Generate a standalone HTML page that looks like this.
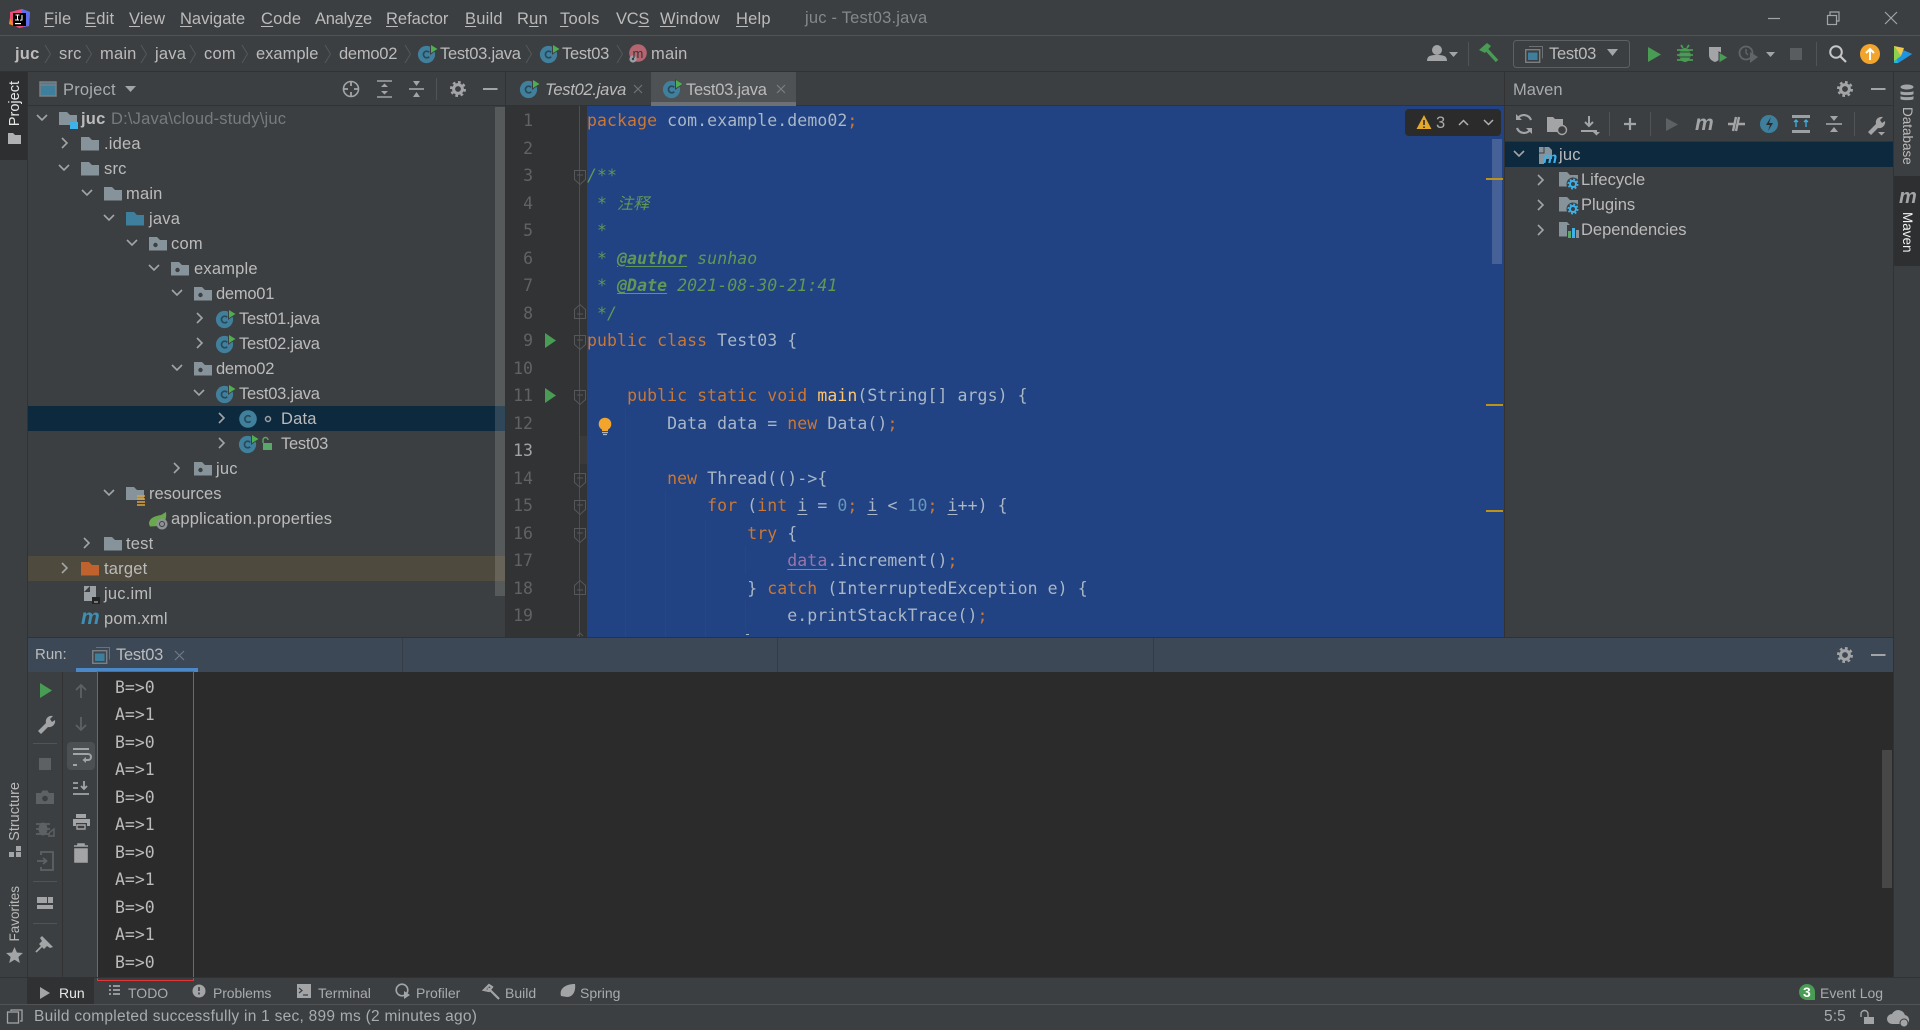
<!DOCTYPE html>
<html lang="en"><head><meta charset="utf-8"><title>juc - Test03.java</title>
<style>
html,body{margin:0;padding:0;background:#3c3f41;width:1920px;height:1030px;overflow:hidden}
*{box-sizing:border-box}
.b{position:absolute}
.t{position:absolute;white-space:pre;line-height:24px;height:24px;font:16.5px/24px "Liberation Sans","Noto Sans CJK SC",sans-serif;letter-spacing:.2px;color:#bbb}
.t u{text-underline-offset:2px;text-decoration-thickness:1px}
.w{letter-spacing:-.25px}
.m0{letter-spacing:0}
.s{font-size:14px;letter-spacing:0;color:#a9abad}
.c{position:absolute;left:587px;white-space:pre;font:16.5px/27.5px "DejaVu Sans Mono",monospace;letter-spacing:.08px;height:27.5px;color:#a9b7c6}
.k{color:#cc7832}.n{color:#6897bb}.f{color:#ffc66d}
.d{color:#629755;font-style:italic}
.g{font-weight:bold;text-decoration:underline;text-underline-offset:2px}
.v{color:#9876aa;text-decoration:underline;text-underline-offset:3px}
.i{text-decoration:underline;text-underline-offset:3px}
.cj{font:italic 16px "Noto Sans CJK SC",sans-serif}
.ln{position:absolute;left:506px;width:27px;text-align:right;font:16.5px/27.5px "DejaVu Sans Mono",monospace;color:#606366}
.o{position:absolute;left:115px;font:16.5px/27.5px "DejaVu Sans Mono",monospace;color:#bbb;white-space:pre}
.vt{position:absolute;writing-mode:vertical-rl;font:14.5px/20px "Liberation Sans",sans-serif;letter-spacing:0;color:#bbb;white-space:pre}
.up{transform:rotate(180deg)}
</style></head><body>

<!-- panels -->
<div class="b" style="left:0;top:35px;width:1920px;height:1px;background:#515355"></div>
<div class="b" style="left:0;top:71px;width:1920px;height:1px;background:#323232"></div>
<div class="b" style="left:0;top:72px;width:27px;height:88px;background:#2d2f30"></div>
<div class="b" style="left:27px;top:72px;width:1px;height:905px;background:#323232"></div>
<div class="b" style="left:27px;top:105px;width:478px;height:1px;background:#323232"></div>
<div class="b" style="left:28px;top:406px;width:478px;height:25px;background:#0d293e"></div>
<div class="b" style="left:28px;top:556px;width:478px;height:25px;background:#4f4a3e"></div>
<div class="b" style="left:495px;top:107px;width:10px;height:489px;background:rgba(255,255,255,.14)"></div>
<div class="b" style="left:505px;top:72px;width:1px;height:565px;background:#323232"></div>

<!-- tabs -->
<div class="b" style="left:506px;top:105px;width:999px;height:1px;background:#323232"></div>
<div class="b" style="left:651px;top:72px;width:145px;height:33px;background:#4e5254"></div>
<div class="b" style="left:651px;top:102px;width:145px;height:4px;background:#6e7173"></div>

<!-- editor -->
<div class="b" style="left:506px;top:106px;width:81px;height:531px;background:#313335"></div>
<div class="b" style="left:580px;top:436px;width:7px;height:28px;background:#3a3a3a"></div>
<div class="b" style="left:587px;top:106px;width:918px;height:531px;background:#214283;overflow:hidden"></div>
<div class="b" style="left:579px;top:106px;width:1px;height:531px;background:#4d4f51"></div>

<!-- maven -->
<div class="b" style="left:1504px;top:72px;width:1px;height:565px;background:#323232"></div>
<div class="b" style="left:1505px;top:105px;width:389px;height:1px;background:#323232"></div>
<div class="b" style="left:1505px;top:141px;width:389px;height:1px;background:#323232"></div>
<div class="b" style="left:1505px;top:142px;width:389px;height:25px;background:#0d293e"></div>
<div class="b" style="left:1893px;top:72px;width:1px;height:905px;background:#323232"></div>
<div class="b" style="left:1894px;top:176px;width:26px;height:90px;background:#2d2f30"></div>

<!-- run -->
<div class="b" style="left:27px;top:637px;width:1867px;height:1px;background:#323232"></div>
<div class="b" style="left:28px;top:638px;width:1865px;height:34px;background:#3c4856"></div>
<div class="b" style="left:402px;top:638px;width:1px;height:34px;background:#353c46"></div>
<div class="b" style="left:777px;top:638px;width:1px;height:34px;background:#353c46"></div>
<div class="b" style="left:1153px;top:638px;width:1px;height:34px;background:#353c46"></div>
<div class="b" style="left:76px;top:668px;width:122px;height:4px;background:#4a88c7"></div>
<div class="b" style="left:97px;top:672px;width:1796px;height:305px;background:#2b2b2b"></div>
<div class="b" style="left:62px;top:672px;width:1px;height:305px;background:#323232"></div>
<div class="b" style="left:1882px;top:750px;width:10px;height:138px;background:#474747"></div>
<div class="b" style="left:97px;top:671px;width:97px;height:310px;border:1.5px solid #e53535"></div>
<div class="b" style="left:67px;top:742px;width:28px;height:28px;background:#4c5052;border-radius:4px"></div>

<!-- bottom -->
<div class="b" style="left:0;top:977px;width:1920px;height:1px;background:#323232"></div>
<div class="b" style="left:27px;top:978px;width:67px;height:26px;background:#2f3132"></div>
<div class="b" style="left:0;top:1004px;width:1920px;height:1px;background:#515355"></div>

<!-- inspection widget -->
<div class="b" style="left:1405px;top:109px;width:96px;height:27px;background:#2b2b2b;border-radius:4px"></div>
<div class="b" style="left:1492px;top:139px;width:10px;height:125px;background:rgba(255,255,255,.17)"></div>
<div class="b" style="left:1486px;top:178px;width:17px;height:2px;background:#be9117"></div>
<div class="b" style="left:1486px;top:404px;width:17px;height:2px;background:#be9117"></div>
<div class="b" style="left:1486px;top:510px;width:17px;height:2px;background:#be9117"></div>

<!-- indent guides -->
<div class="b" style="left:625px;top:409px;width:1px;height:228px;background:#33456e"></div>
<div class="b" style="left:665px;top:491px;width:1px;height:146px;background:#33456e"></div>
<div class="b" style="left:705px;top:519px;width:1px;height:118px;background:#33456e"></div>
<div class="b" style="left:745px;top:546px;width:1px;height:28px;background:#33456e"></div>
<div class="b" style="left:745px;top:601px;width:1px;height:28px;background:#33456e"></div>

<svg class="b" style="left:0;top:0" width="1920" height="1030" viewBox="0 0 1920 1030" fill="none">
<defs>
<symbol id="fo" width="18" height="14" viewBox="0 0 18 14" overflow="visible"><path d="M0 0h8l3 3h7v10.500H0z" fill="#87939a"/></symbol>
<symbol id="pk" width="18" height="14" viewBox="0 0 18 14" overflow="visible"><path d="M0 0h8l3 3h7v10.500H0z" fill="#87939a"/><circle cx="6.500" cy="8" r="2.200" fill="#3c3f41"/></symbol>
<symbol id="cl" width="18" height="18" viewBox="0 0 18 18" overflow="visible"><circle cx="8.500" cy="9.500" r="8.600" fill="#40809d"/><path d="M11.200 7.300A3.300 3.300 0 1 0 11.200 11.700" stroke="#27495a" stroke-width="1.700"/><path d="M12 -1l8 5-8 6z" fill="#3c3f41"/><path d="M13 0l6.500 4-6.500 4z" fill="#4fae4f"/></symbol>
<symbol id="cn" width="18" height="18" viewBox="0 0 18 18" overflow="visible"><circle cx="9" cy="9" r="8.800" fill="#40809d"/><path d="M11.600 6.800A3.300 3.300 0 1 0 11.600 11.200" stroke="#27495a" stroke-width="1.700"/></symbol>
<symbol id="dn" width="12" height="8" viewBox="0 0 12 8" overflow="visible"><path d="M1 1l5 5 5-5" stroke="#a2a4a6" stroke-width="1.600"/></symbol>
<symbol id="rt" width="8" height="12" viewBox="0 0 8 12" overflow="visible"><path d="M1 1l5 5-5 5" stroke="#a2a4a6" stroke-width="1.600"/></symbol>
<symbol id="nv" width="6" height="18" viewBox="0 0 6 18" overflow="visible"><path d="M0 0l5.500 9L0 18" stroke="#55585a" stroke-width="1"/></symbol>
<symbol id="gr" width="16" height="16" viewBox="0 0 16 16" overflow="visible"><circle cx="8" cy="8" r="4.400" stroke="#a2a4a6" stroke-width="3"/><circle cx="8" cy="8" r="6.800" stroke="#a2a4a6" stroke-width="2.400" stroke-dasharray="2.700 2.600"/></symbol>
<symbol id="bg" width="10" height="10" viewBox="0 0 10 10" overflow="visible"><circle cx="5" cy="5" r="3" stroke="#3db1e8" stroke-width="2"/><circle cx="5" cy="5" r="4.700" stroke="#3db1e8" stroke-width="1.600" stroke-dasharray="1.900 1.800"/></symbol>
<symbol id="fa" width="12" height="15" viewBox="0 0 12 15" overflow="visible"><path d="M.5.5h11v9L6 14.500.5 9.500z" stroke="#55585a"/><path d="M3 5h6" stroke="#55585a"/></symbol>
<symbol id="fb" width="12" height="15" viewBox="0 0 12 15" overflow="visible"><path d="M.5 14.500h11v-9L6 .5.500 5.500z" stroke="#55585a"/><path d="M3 10h6" stroke="#55585a"/></symbol>
<symbol id="tw" width="18" height="17" viewBox="0 0 18 17" overflow="visible"><path d="M4 .5h13.500v12" stroke="#6e7173"/><rect x=".7" y="3.700" width="14" height="12.600" stroke="#7c7f81" stroke-width="1.400"/><rect x="3" y="6.500" width="9.500" height="7.500" fill="#3d7f9d"/></symbol>
</defs>

<!-- logo -->
<path d="M10 12l12-3 8 3 -1 14-10 2-9-5z" fill="#ee4c7c"/><path d="M22 9l8 3-1 14-6 1z" fill="#5d6df0"/><path d="M10 18l-1 6 5 2z" fill="#f58a1f"/>
<rect x="13" y="13" width="13" height="13" fill="#000"/><path d="M15.500 15h4M17.500 15v5M15 20h4M22 15v5l-2 .3" stroke="#fff" stroke-width="1"/><rect x="15" y="23" width="6" height="1.200" fill="#fff"/>

<!-- nav chevrons -->
<use href="#nv" x="45" y="45"/><use href="#nv" x="86" y="45"/><use href="#nv" x="141" y="45"/><use href="#nv" x="190" y="45"/><use href="#nv" x="242" y="45"/><use href="#nv" x="325" y="45"/><use href="#nv" x="405" y="45"/><use href="#nv" x="526" y="45"/><use href="#nv" x="617" y="45"/>
<use href="#cl" x="418" y="45"/><use href="#cl" x="540" y="45"/>
<circle cx="638" cy="53" r="8.800" fill="#b56570"/><circle cx="633" cy="59" r="3.600" fill="#9aa0a4"/><circle cx="633" cy="59" r="1.200" fill="#3c3f41"/>

<!-- window btns -->
<path d="M1768 18.500h12" stroke="#a2a4a6" stroke-width="1.200"/>
<rect x="1827.500" y="15.500" width="9" height="9" stroke="#a2a4a6" stroke-width="1.200"/><path d="M1830 15v-3h9v9h-2.500" stroke="#a2a4a6" stroke-width="1.200"/>
<path d="M1885 12l12 12m0-12l-12 12" stroke="#a2a4a6" stroke-width="1.200"/>

<!-- top toolbar -->
<circle cx="1437" cy="50" r="5" fill="#a2a4a6"/><path d="M1427 61c0-5 3-6 10-6s10 1 10 6z" fill="#a2a4a6"/>
<path d="M1449 52h9l-4.500 5z" fill="#a2a4a6"/><path d="M1468.500 42v24" stroke="#515355"/>
<path d="M1486 49l11 12" stroke="#499c54" stroke-width="3.400"/><path d="M1479 50l8-7 4 3-6 7z" fill="#499c54"/>
<rect x="1513.500" y="40.500" width="116" height="27" rx="3" stroke="#5e6163" stroke-width="1"/>
<use href="#tw" x="1525" y="46"/>
<path d="M1607 49h11l-5.500 7z" fill="#a2a4a6"/>
<path d="M1648 47l13 7.500-13 7.500z" fill="#499c54"/>
<ellipse cx="1685" cy="55" rx="5.500" ry="7" fill="#499c54"/><path d="M1677 50h16M1677 55h16M1677 60h16M1681 45l2 3m6-3l-2 3" stroke="#499c54" stroke-width="1.800"/><path d="M1680 52h10M1680 57h10" stroke="#3c3f41"/>
<path d="M1709 47h12v8c0 4-3 6-6 7-3-1-6-3-6-7z" fill="#a2a4a6"/><path d="M1719 52l9 5.500-9 5.500z" fill="#499c54" stroke="#3c3f41"/>
<circle cx="1746" cy="53" r="6.500" stroke="#626567" stroke-width="1.800"/><path d="M1746 49v4l2 2" stroke="#626567" stroke-width="1.400"/><path d="M1750 52l8 5-8 6z" fill="#626567"/>
<path d="M1766 52h9l-4.500 5z" fill="#a2a4a6"/>
<rect x="1790" y="48" width="12" height="12" fill="#5a5d5f"/>
<path d="M1816.500 42v24" stroke="#515355"/>
<circle cx="1836" cy="52" r="5.800" stroke="#c4c6c8" stroke-width="2"/><path d="M1840 56l6 6" stroke="#c4c6c8" stroke-width="2.200"/>
<circle cx="1870" cy="54" r="10" fill="#f2a52c"/><path d="M1870 60v-11m-4 4l4-4 4 4" stroke="#fff" stroke-width="2"/>
<path d="M1894 46l18 8-14 9h-4z" fill="#25b8d8"/><path d="M1894 46l4 17 14-9z" fill="#1f95e0"/><path d="M1894 46v15l7-5z" fill="#8cd14b"/><path d="M1894 46l10 2-3 8z" fill="#f2c94c"/>

<!-- project header -->
<rect x="40" y="82" width="16" height="14" fill="#3d7f9d" stroke="#7c7f81" stroke-width="1.500"/><path d="M40 85h16" stroke="#7c7f81" stroke-width="1.500"/>
<path d="M125 86h11l-5.500 6z" fill="#a2a4a6"/>
<circle cx="351" cy="89" r="7.500" stroke="#a2a4a6" stroke-width="1.600"/><path d="M351 81v5m0 6v5m-8-8h5m6 0h5" stroke="#a2a4a6" stroke-width="1.800"/>
<path d="M377 81h15M377 97h15" stroke="#a2a4a6" stroke-width="1.600"/><path d="M381 87l3.500-3.500 3.500 3.500zM381 91l3.500 3.500 3.500-3.500z" fill="#a2a4a6"/>
<path d="M409 89h15" stroke="#a2a4a6" stroke-width="1.600"/><path d="M413 81h7l-3.500 5zM413 97h7l-3.500-5z" fill="#a2a4a6"/>
<path d="M436.500 78v22" stroke="#515355"/>
<use href="#gr" x="450" y="81"/><path d="M483 89h14.500" stroke="#a2a4a6" stroke-width="2"/>

<!-- left stripe -->
<path d="M8 133h5l2 2h6v9H8z" fill="#afb1b3"/>
<path d="M9 852h5v5H9zM16 852h5v5h-5zM16 846h5v5h-5z" fill="#a2a4a6"/>
<path d="M14.500 947l2.400 5.500 6 .5-4.500 4 1.400 6-5.300-3.200L9.200 963l1.400-6-4.500-4 6-.5z" fill="#a2a4a6"/>

<!-- tree icons -->
<use href="#dn" x="36" y="114"/><path d="M59 112h8l3 3h7v10H59z" fill="#87939a"/><rect x="70" y="122" width="8" height="7" fill="#3db1e8"/>
<use href="#rt" x="61" y="137"/><use href="#fo" x="81" y="137"/>
<use href="#dn" x="58" y="164"/><use href="#fo" x="81" y="162"/>
<use href="#dn" x="81" y="189"/><use href="#fo" x="104" y="187"/>
<use href="#dn" x="103" y="214"/><path d="M126 212h8l3 3h7v10.500h-18z" fill="#3d7f9d"/>
<use href="#dn" x="126" y="239"/><use href="#pk" x="149" y="237"/>
<use href="#dn" x="148" y="264"/><use href="#pk" x="171" y="262"/>
<use href="#dn" x="171" y="289"/><use href="#pk" x="194" y="287"/>
<use href="#rt" x="196" y="312"/><use href="#cl" x="216" y="310"/>
<use href="#rt" x="196" y="337"/><use href="#cl" x="216" y="335"/>
<use href="#dn" x="171" y="364"/><use href="#pk" x="194" y="362"/>
<use href="#dn" x="193" y="389"/><use href="#cl" x="216" y="385"/>
<use href="#rt" x="218" y="412"/><use href="#cn" x="239" y="410"/><circle cx="268" cy="419" r="2.500" stroke="#9aa0a4" stroke-width="1.500"/>
<use href="#rt" x="218" y="437"/><use href="#cl" x="239" y="435"/><rect x="263" y="443" width="9" height="7" fill="#59a869"/><path d="M263 443v-3a2.500 2.500 0 0 1 5 0" stroke="#59a869" stroke-width="1.400"/>
<use href="#rt" x="173" y="462"/><use href="#pk" x="194" y="462"/>
<use href="#dn" x="103" y="489"/><path d="M126 487h8l3 3h7v10h-18z" fill="#87939a"/><path d="M137 496h8M137 499h8M137 502h8M137 505h8" stroke="#d9a343" stroke-width="1.600"/>
<path d="M149 524c0-6 6-8 12-9l5-3c1 6-1 12-7 14l-9 .5z" fill="#6aa84f"/><circle cx="162" cy="524" r="5.500" fill="#8e9295"/><circle cx="162" cy="524" r="2.500" stroke="#3c3f41"/>
<use href="#rt" x="83" y="537"/><use href="#fo" x="104" y="537"/>
<use href="#rt" x="61" y="562"/><path d="M81 562h8l3 3h7v10.500H81z" fill="#c0622d"/>
<path d="M84 586h12v15H84z" fill="#9aa0a4"/><path d="M84 592l6-6v6z" fill="#3c3f41"/><rect x="92" y="597" width="8" height="7" fill="#232323"/><path d="M94 602h4" stroke="#ccc"/>

<!-- editor tabs -->
<use href="#cl" x="520" y="80"/><use href="#cl" x="663" y="80"/>
<path d="M634 85l8 8m0-8l-8 8" stroke="#6e7173" stroke-width="1.200"/><path d="M777 85l8 8m0-8l-8 8" stroke="#7c7f81" stroke-width="1.200"/>

<!-- gutter -->
<use href="#fa" x="574" y="170"/><use href="#fb" x="574" y="304"/><use href="#fa" x="574" y="335"/><use href="#fa" x="574" y="390"/><use href="#fa" x="574" y="473"/><use href="#fa" x="574" y="500"/><use href="#fa" x="574" y="528"/><use href="#fb" x="574" y="580"/>
<path d="M577 636l3-3 3 3" stroke="#55585a"/><path d="M746 634.500h3" stroke="#a9b7c6"/>
<path d="M545 333l11 7.500-11 7.500z" fill="#499c54"/><path d="M545 388l11 7.500-11 7.500z" fill="#499c54"/>
<circle cx="605" cy="424" r="6.300" fill="#f2a52c"/><path d="M602 428h6v3h-6z" fill="#f2a52c"/><path d="M602 432.500h6M603 434.500h4" stroke="#a9b7c6" stroke-width="1.200"/>

<!-- inspection -->
<path d="M1424 115l7.500 14h-15z" fill="#e2a72b"/><path d="M1424 120v5m0 1.500v1.500" stroke="#2b2b2b" stroke-width="1.600"/>
<path d="M1459 125l4.500-4.500 4.500 4.500M1484 120l4.500 4.500 4.500-4.500" stroke="#b0b2b4" stroke-width="1.500"/>

<!-- maven header -->
<use href="#gr" x="1837" y="81"/><path d="M1871 89h14.500" stroke="#a2a4a6" stroke-width="2"/>
<!-- maven toolbar -->
<path d="M1531 120a7.500 7.500 0 0 0-13-2m-1 10a7.500 7.500 0 0 0 13 2" stroke="#a2a4a6" stroke-width="2.200"/><path d="M1516 114v6h6zM1532 134v-6h-6z" fill="#a2a4a6"/>
<path d="M1547 117h6l2 2h8v13h-16z" fill="#a2a4a6"/><circle cx="1562" cy="130" r="4.500" stroke="#a2a4a6" stroke-width="1.400" fill="#3c3f41"/>
<path d="M1589 116v10m-4-4l4 4 4-4" stroke="#a2a4a6" stroke-width="2"/><path d="M1581 131h16" stroke="#a2a4a6" stroke-width="2"/><path d="M1593 132h7l-3.500 3.500z" fill="#a2a4a6"/>
<path d="M1609.500 112v24M1650.500 112v24M1854.500 112v24" stroke="#515355"/>
<path d="M1630 118v12m-6-6h12" stroke="#a2a4a6" stroke-width="2.200"/>
<path d="M1666 118l12 6.500-12 6.500z" fill="#5e6163"/>
<path d="M1728 124h7m3 0h7M1736 131l3-14M1733 131l3-14" stroke="#a2a4a6" stroke-width="2.400"/>
<circle cx="1769" cy="124" r="9" fill="#3d7f9d"/><path d="M1771 117l-5 8h4l-2 6 5-8h-4z" fill="#2b2b2b"/>
<path d="M1792 115h18v3h-18zM1792 130h18v3h-18z" fill="#9aa0a4"/><path d="M1796 127v-7m-2 2l2-2 2 2M1806 127v-7m-2 2l2-2 2 2" stroke="#3db1e8" stroke-width="1.300"/>
<path d="M1826 124h16" stroke="#a2a4a6" stroke-width="1.600"/><path d="M1830 116h8l-4 5zM1830 132h8l-4-5z" fill="#a2a4a6"/>
<path d="M1868 132l8-8c-1-4 2-8 7-7l-3 3 2 3 3-2c1 4-3 8-7 7l-7 7z" fill="#a2a4a6"/><path d="M1878 132h7l-3.500 3.500z" fill="#a2a4a6"/>

<!-- maven tree -->
<use href="#dn" x="1513" y="150"/><path d="M1539 147h10l3 3v9h-8v5h-5z" fill="#87939a"/><path d="M1544 147v6h-5" stroke="#3c3f41"/>
<use href="#rt" x="1537" y="174"/><path d="M1559 172h8l3 3h8v11.500h-19z" fill="#87939a"/><circle cx="1573" cy="184" r="6.500" fill="#3c3f41"/><use href="#bg" x="1568" y="179"/>
<use href="#rt" x="1537" y="199"/><path d="M1559 197h8l3 3h8v11.500h-19z" fill="#87939a"/><circle cx="1573" cy="209" r="6.500" fill="#3c3f41"/><use href="#bg" x="1568" y="204"/>
<use href="#rt" x="1537" y="224"/><path d="M1559 222h8l3 3h8v11.500h-19z" fill="#87939a"/><path d="M1567 225h12v13h-12z" fill="#3c3f41"/><path d="M1568 231h3v7h-3z" fill="#59a869"/><path d="M1572 228h3v10h-3z" fill="#3db1e8"/><path d="M1576 230h3v8h-3z" fill="#8e9295"/>

<!-- right stripe -->
<ellipse cx="1907" cy="87" rx="6.500" ry="2.500" fill="#a2a4a6"/><path d="M1900.500 91c0 1.500 13 1.500 13 0v3c0 1.500-13 1.500-13 0zM1900.500 96c0 1.500 13 1.500 13 0v3c0 1.500-13 1.500-13 0z" fill="#a2a4a6"/>

<!-- run tab -->
<use href="#tw" x="92" y="647"/>
<path d="M175 651l9 9m0-9l-9 9" stroke="#6e7a88" stroke-width="1.200"/>
<use href="#gr" x="1837" y="647"/><path d="M1871 655h14.500" stroke="#a2a4a6" stroke-width="2"/>

<!-- run toolbar col1 -->
<path d="M40 683l12 7.500-12 7.500z" fill="#499c54"/>
<path d="M38 731l8-8c-1-4 2-8 7-7l-3 3 2 3 3-2c1 4-3 8-7 7l-7 7z" fill="#a2a4a6"/>
<path d="M33 743.500h24M33 881.500h24M33 923.500h24" stroke="#515355"/>
<rect x="39" y="758" width="12" height="12" fill="#5e6163"/>
<path d="M36 793h5l1.500-2.500h5L49 793h5v11H36z" fill="#5e6163"/><circle cx="45" cy="798.500" r="2.800" fill="#3c3f41"/>
<ellipse cx="43" cy="829" rx="4.500" ry="6.500" fill="#5e6163"/><path d="M36 824h14M36 829h14M36 834h14" stroke="#5e6163" stroke-width="1.800"/><path d="M49 833l5-4v7h-6" stroke="#5e6163" stroke-width="1.400"/>
<path d="M41 855v-3h12v18H41v-3" stroke="#5e6163" stroke-width="1.800"/><path d="M37 861h9m-3-3l3.500 3-3.500 3" stroke="#5e6163" stroke-width="1.800"/>
<path d="M37 897h10v6H37zM48 897h5v6h-5zM37 905h16v4H37z" fill="#a2a4a6"/>
<path d="M36 952l8-8" stroke="#a2a4a6" stroke-width="1.800"/><path d="M42 936l11 11-3 1-3-2-3 3-5-5 3-3-2-3z" fill="#a2a4a6"/>

<!-- run toolbar col2 -->
<path d="M81 698v-13m-5 5l5-5 5 5" stroke="#5e6163" stroke-width="1.800"/>
<path d="M81 717v13m-5-5l5 5 5-5" stroke="#5e6163" stroke-width="1.800"/>
<path d="M73 749h16M73 754h15c4 0 4 6 0 6h-4M73 765h4" stroke="#a2a4a6" stroke-width="2"/><path d="M86 757l-3.500 3 3.500 3z" fill="#a2a4a6"/>
<path d="M73 783h5M73 788h5M73 794h16M84 781v8m-3-3l3 3 3-3" stroke="#a2a4a6" stroke-width="1.800"/>
<path d="M76 814h10v4H76z" fill="#a2a4a6"/><path d="M73 819h17v7h-3v-3H76v3h-3z" fill="#a2a4a6"/><path d="M77 825h8v4h-8z" stroke="#a2a4a6" stroke-width="1.400"/>
<path d="M75 849h12v13H75zM74 846h14M78 846v-2h6v2" stroke="#a2a4a6" stroke-width="1.600" fill="#a2a4a6"/>

<!-- bottom tool -->
<path d="M40 987l10 6-10 6z" fill="#a2a4a6"/>
<path d="M109 986h2M109 990h2M109 994h2M113 986h7M113 990h7M113 994h7" stroke="#a2a4a6" stroke-width="1.800"/>
<circle cx="199" cy="991" r="6.500" fill="#a2a4a6"/><path d="M199 987v4m0 1.500v2" stroke="#3c3f41" stroke-width="1.600"/>
<rect x="297" y="984" width="14" height="14" fill="#a2a4a6"/><path d="M299 988l3 2.500-3 2.500M303 995h5" stroke="#3c3f41" stroke-width="1.200"/>
<circle cx="402" cy="990" r="5.800" stroke="#a2a4a6" stroke-width="1.600"/><path d="M404 991l6 4-6 4z" fill="#a2a4a6"/>
<path d="M484 990l5-5 3 2-3 4zM488 988l11 11" stroke="#a2a4a6" stroke-width="2.200"/>
<path d="M561 996c-2-7 4-12 14-12 1 7-2 13-8 13z" fill="#a2a4a6"/>
<path d="M1807 984a8 8 0 1 0 0 16h8v-8a8 8 0 0 0-8-8z" fill="#499c54"/>

<!-- status -->
<rect x="7.500" y="1012" width="11" height="11" stroke="#a2a4a6" stroke-width="1.300"/><path d="M11 1011v-1h11v11h-2" stroke="#a2a4a6" stroke-width="1.300"/>
<rect x="1864" y="1017" width="10" height="7" fill="#a2a4a6"/><path d="M1861 1017v-3a3.500 3.500 0 0 1 7 0v3" stroke="#a2a4a6" stroke-width="1.400"/>
<path d="M1892 1024a5 5 0 0 1 0-10 7 7 0 0 1 13 1 5 5 0 0 1 2 9z" fill="#a2a4a6"/><circle cx="1904" cy="1023" r="4" fill="#a2a4a6" stroke="#3c3f41"/>
</svg>

<!-- menu -->
<div class="t" style="left:44px;top:7px"><u>F</u>ile</div>
<div class="t" style="left:85px;top:7px"><u>E</u>dit</div>
<div class="t" style="left:129px;top:7px"><u>V</u>iew</div>
<div class="t m0" style="left:180px;top:7px"><u>N</u>avigate</div>
<div class="t" style="left:261px;top:7px"><u>C</u>ode</div>
<div class="t w" style="left:315px;top:7px">Analy<u>z</u>e</div>
<div class="t m0" style="left:386px;top:7px"><u>R</u>efactor</div>
<div class="t" style="left:465px;top:7px"><u>B</u>uild</div>
<div class="t" style="left:517px;top:7px">R<u>u</u>n</div>
<div class="t" style="left:560px;top:7px"><u>T</u>ools</div>
<div class="t w" style="left:616px;top:7px">VC<u>S</u></div>
<div class="t" style="left:660px;top:7px"><u>W</u>indow</div>
<div class="t" style="left:736px;top:7px"><u>H</u>elp</div>
<div class="t" style="left:805px;top:6px;color:#85878a">juc - Test03.java</div>

<!-- nav -->
<div class="t" style="left:15px;top:42px;font-weight:bold">juc</div>
<div class="t" style="left:59px;top:42px">src</div>
<div class="t" style="left:100px;top:42px">main</div>
<div class="t" style="left:155px;top:42px">java</div>
<div class="t" style="left:204px;top:42px">com</div>
<div class="t m0" style="left:256px;top:42px">example</div>
<div class="t w" style="left:339px;top:42px">demo02</div>
<div class="t w" style="left:440px;top:42px">Test03.java</div>
<div class="t w" style="left:562px;top:42px">Test03</div>
<div class="t" style="left:632.500px;top:42px;font-size:13px;letter-spacing:0;color:#33363a">m</div>
<div class="t" style="left:651px;top:42px">main</div>

<!-- project -->
<div class="t" style="left:63px;top:78px;color:#a9abad">Project</div>
<div class="t" style="left:81px;top:107px;font-weight:bold">juc</div>
<div class="t" style="left:111px;top:107px;color:#787a7c">D:\Java\cloud-study\juc</div>
<div class="t" style="left:104px;top:132px">.idea</div>
<div class="t" style="left:104px;top:157px">src</div>
<div class="t" style="left:126px;top:182px">main</div>
<div class="t" style="left:149px;top:207px">java</div>
<div class="t" style="left:171px;top:232px">com</div>
<div class="t" style="left:194px;top:257px">example</div>
<div class="t w" style="left:216px;top:282px">demo01</div>
<div class="t w" style="left:239px;top:307px">Test01.java</div>
<div class="t w" style="left:239px;top:332px">Test02.java</div>
<div class="t w" style="left:216px;top:357px">demo02</div>
<div class="t w" style="left:239px;top:382px">Test03.java</div>
<div class="t" style="left:281px;top:407px">Data</div>
<div class="t w" style="left:281px;top:432px">Test03</div>
<div class="t" style="left:216px;top:457px">juc</div>
<div class="t m0" style="left:149px;top:482px">resources</div>
<div class="t" style="left:171px;top:507px">application.properties</div>
<div class="t" style="left:126px;top:532px">test</div>
<div class="t" style="left:104px;top:557px">target</div>
<div class="t" style="left:104px;top:582px">juc.iml</div>
<div class="t" style="left:81px;top:606px;font:italic bold 21px/24px 'Liberation Sans',sans-serif;color:#3d8fb5;letter-spacing:-.5px">m</div>
<div class="t" style="left:104px;top:607px">pom.xml</div>

<!-- vertical -->
<div class="vt up" style="left:5px;top:81px;color:#e8e8e8">Project</div>
<div class="vt up" style="left:5px;top:782px">Structure</div>
<div class="vt up" style="left:5px;top:886px;font-size:13.500px">Favorites</div>
<div class="vt" style="left:1897px;top:107px;font-size:13.500px">Database</div>
<div class="vt" style="left:1897px;top:212px;color:#f0f0f0;font-size:13.500px">Maven</div>
<div class="t" style="left:1899px;top:185px;font:italic bold 20px/24px 'Liberation Sans',sans-serif;color:#a2a4a6;letter-spacing:0">m</div>

<!-- tabs text -->
<div class="t w" style="left:545px;top:78px;font-style:italic">Test02.java</div>
<div class="t w" style="left:686px;top:78px">Test03.java</div>

<!-- line numbers -->
<div class="ln" style="top:107.250px">1</div><div class="ln" style="top:134.750px">2</div><div class="ln" style="top:162.250px">3</div><div class="ln" style="top:189.750px">4</div><div class="ln" style="top:217.250px">5</div><div class="ln" style="top:244.750px">6</div><div class="ln" style="top:272.250px">7</div><div class="ln" style="top:299.750px">8</div><div class="ln" style="top:327.250px">9</div><div class="ln" style="top:354.750px">10</div><div class="ln" style="top:382.250px">11</div><div class="ln" style="top:409.750px">12</div><div class="ln" style="top:437.250px;color:#a4a3a3">13</div><div class="ln" style="top:464.750px">14</div><div class="ln" style="top:492.250px">15</div><div class="ln" style="top:519.750px">16</div><div class="ln" style="top:547.250px">17</div><div class="ln" style="top:574.750px">18</div><div class="ln" style="top:602.250px">19</div>

<!-- code -->
<div class="c" style="top:107.250px"><span class="k">package</span> com.example.demo02<span class="k">;</span></div>
<div class="c" style="top:162.250px"><span class="d">/**</span></div>
<div class="c" style="top:189.750px"><span class="d"> * <span class="cj">注释</span></span></div>
<div class="c" style="top:217.250px"><span class="d"> *</span></div>
<div class="c" style="top:244.750px"><span class="d"> * <span class="g">@author</span> sunhao</span></div>
<div class="c" style="top:272.250px"><span class="d"> * <span class="g">@Date</span> 2021-08-30-21:41</span></div>
<div class="c" style="top:299.750px"><span class="d"> */</span></div>
<div class="c" style="top:327.250px"><span class="k">public class</span> Test03 {</div>
<div class="c" style="top:382.250px">    <span class="k">public static void</span> <span class="f">main</span>(String[] args) {</div>
<div class="c" style="top:409.750px">        Data data = <span class="k">new</span> Data()<span class="k">;</span></div>
<div class="c" style="top:464.750px">        <span class="k">new</span> Thread(()-&gt;{</div>
<div class="c" style="top:492.250px">            <span class="k">for</span> (<span class="k">int</span> <span class="i">i</span> = <span class="n">0</span><span class="k">;</span> <span class="i">i</span> &lt; <span class="n">10</span><span class="k">;</span> <span class="i">i</span>++) {</div>
<div class="c" style="top:519.750px">                <span class="k">try</span> {</div>
<div class="c" style="top:547.250px">                    <span class="v">data</span>.increment()<span class="k">;</span></div>
<div class="c" style="top:574.750px">                } <span class="k">catch</span> (InterruptedException e) {</div>
<div class="c" style="top:602.250px">                    e.printStackTrace()<span class="k">;</span></div>

<div class="t" style="left:1436px;top:111px;color:#a9abad">3</div>
<div class="t w" style="left:1549px;top:42px">Test03</div>

<!-- maven -->
<div class="t m0" style="left:1513px;top:78px;color:#a9abad">Maven</div>
<div class="t" style="left:1695px;top:112px;font:italic bold 21px/24px 'Liberation Sans',sans-serif;color:#a2a4a6;letter-spacing:0">m</div>
<div class="t" style="left:1543px;top:151px;font:italic bold 16px/16px 'Liberation Sans',sans-serif;color:#3db1e8;height:16px;letter-spacing:-.5px">m</div>
<div class="t" style="left:1559px;top:143px">juc</div>
<div class="t m0" style="left:1581px;top:168px">Lifecycle</div>
<div class="t m0" style="left:1581px;top:193px">Plugins</div>
<div class="t m0" style="left:1581px;top:218px">Dependencies</div>

<!-- run -->
<div class="t" style="left:35px;top:643px;font-size:15px;letter-spacing:0">Run:</div>
<div class="t w" style="left:116px;top:643px">Test03</div>

<div class="o" style="top:673.500px">B=&gt;0</div><div class="o" style="top:701px">A=&gt;1</div><div class="o" style="top:728.500px">B=&gt;0</div><div class="o" style="top:756px">A=&gt;1</div><div class="o" style="top:783.500px">B=&gt;0</div><div class="o" style="top:811px">A=&gt;1</div><div class="o" style="top:838.500px">B=&gt;0</div><div class="o" style="top:866px">A=&gt;1</div><div class="o" style="top:893.500px">B=&gt;0</div><div class="o" style="top:921px">A=&gt;1</div><div class="o" style="top:948.500px">B=&gt;0</div>

<!-- bottom -->
<div class="t s" style="left:59px;top:981px;color:#e8e8e8">Run</div>
<div class="t s" style="left:128px;top:981px">TODO</div>
<div class="t s" style="left:213px;top:981px;letter-spacing:-.1px">Problems</div>
<div class="t s" style="left:318px;top:981px">Terminal</div>
<div class="t s" style="left:416px;top:981px">Profiler</div>
<div class="t s" style="left:505px;top:981px">Build</div>
<div class="t s" style="left:580px;top:981px">Spring</div>
<div class="t s" style="left:1820px;top:981px">Event Log</div>
<div class="t s" style="left:1803px;top:980px;color:#fff;font-weight:bold">3</div>
<div class="t" style="left:34px;top:1005px;font-size:15.500px;letter-spacing:.26px;color:#a9abad">Build completed successfully in 1 sec, 899 ms (2 minutes ago)</div>
<div class="t" style="left:1824px;top:1005px;font-size:15.500px;letter-spacing:.1px;color:#a9abad">5:5</div>
</body></html>
